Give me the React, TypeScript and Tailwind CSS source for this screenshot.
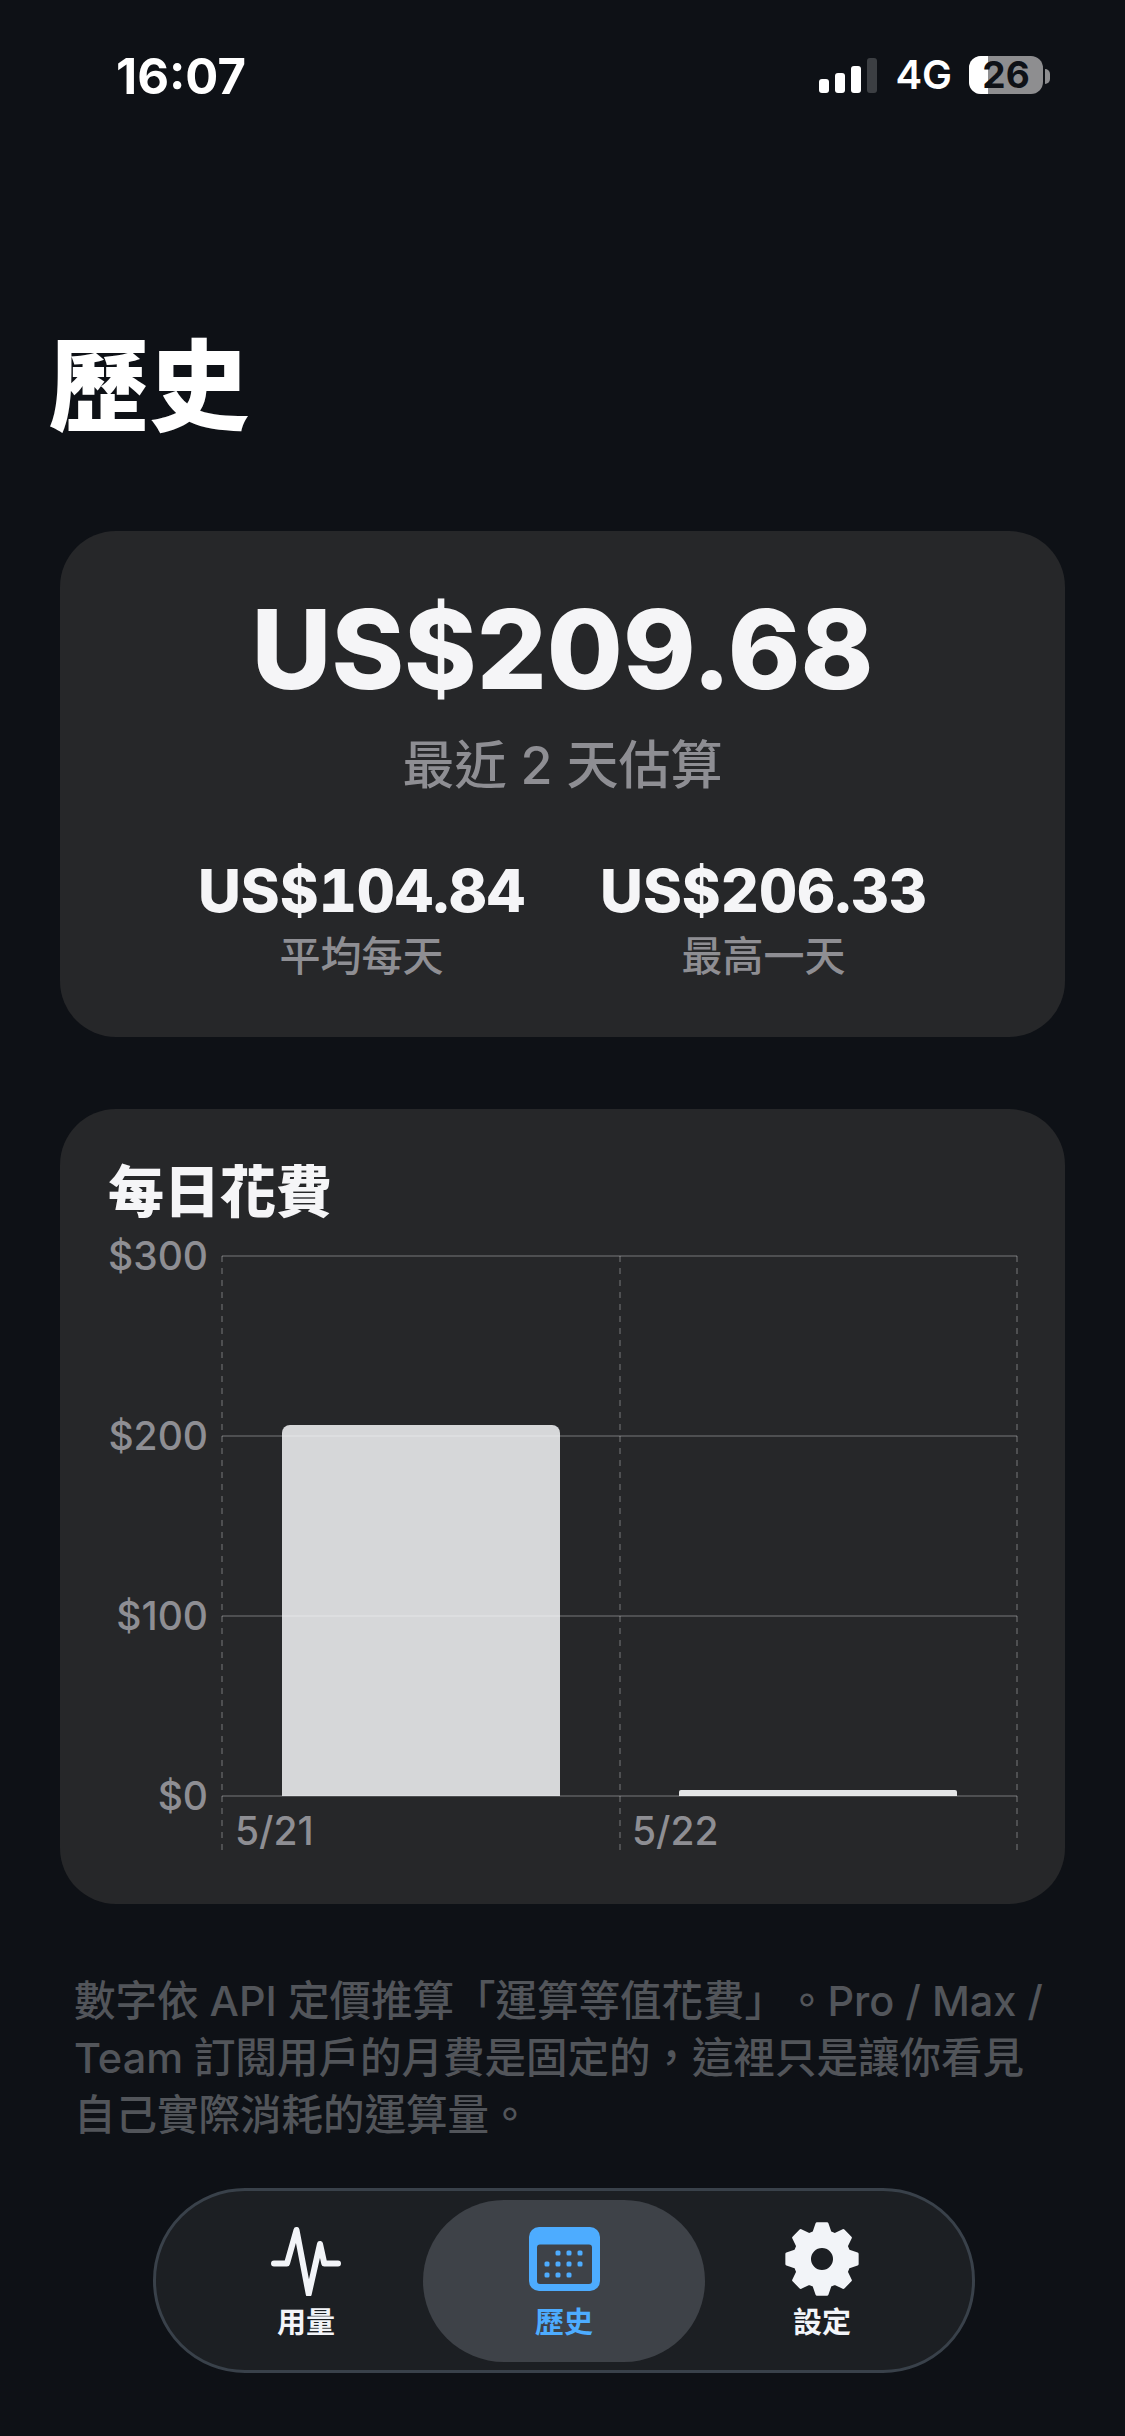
function gearPath() {
	const cx = 37;
	const cy = 37;
	const pts: string[] = [];
	for (let i = 0; i < 8; i++) {
		const a = (i * Math.PI) / 4 - Math.PI / 2;
		const step = Math.PI / 8;
		const list: [number, number][] = [
			[27.5, a - step * 0.76],
			[35.5, a - step * 0.36],
			[35.5, a + step * 0.36],
			[27.5, a + step * 0.76],
		];
		for (const [r, t] of list) {
			pts.push(`${(cx + r * Math.cos(t)).toFixed(2)} ${(cy + r * Math.sin(t)).toFixed(2)}`);
		}
	}
	return `M${pts.join("L")}Z`;
}

function StatusBar() {
	return (
		<div className="flex h-[94px] items-start justify-between pt-[56px] pl-[116px] pr-[75px]">
			<span className="text-[49px] leading-[42px] font-bold text-white">16:07</span>
			<div className="flex items-start">
				<div className="flex h-[35px] items-end gap-[6px] mt-[2px]">
					<div className="h-[14px] w-[10px] rounded-[3px] bg-white" />
					<div className="h-[20px] w-[10px] rounded-[3px] bg-white" />
					<div className="h-[27px] w-[10px] rounded-[3px] bg-white" />
					<div className="h-[35px] w-[10px] rounded-[3px] bg-[#3c3f43]" />
				</div>
				<span className="ml-[18px] text-[40px] leading-[38px] font-semibold text-white">4G</span>
				<div className="relative ml-[17px] flex h-[38px] w-[74px] items-center justify-center rounded-[12px] bg-[#8e8e90]">
					<div className="absolute inset-y-0 left-0 w-[19px] rounded-l-[12px] bg-white" />
					<span className="relative text-[37px] leading-[38px] font-bold text-[#0e1116]">26</span>
				</div>
				<div className="ml-[2px] mt-[13px] h-[15px] w-[5px] rounded-r-full bg-[#8e8e90]" />
			</div>
		</div>
	);
}

function SummaryCard() {
	return (
		<div className="mx-[60px] mt-[92px] flex h-[506px] flex-col items-center rounded-[56px] bg-[#262729] pt-[56px]">
			<div className="text-[110px] leading-[124px] font-extrabold text-[#f5f5f7]">US$209.68</div>
			<div className="mt-[23px] text-[52px] leading-[64px] font-medium text-[#8e8e93]">最近 2 天估算</div>
			<div className="mt-[58px] flex gap-[75px]">
				<Stat value="US$104.84" label="平均每天" />
				<Stat value="US$206.33" label="最高一天" />
			</div>
		</div>
	);
}

function Stat({ value, label }: { value: string; label: string }) {
	return (
		<div className="flex flex-col items-center">
			<div className="text-[59px] leading-[70px] font-extrabold tabular-nums text-[#f5f5f7]">{value}</div>
			<div className="mt-[4px] text-[41px] leading-[52px] font-medium text-[#8e8e93]">{label}</div>
		</div>
	);
}

function ChartCard() {
	const grid = "rgba(255,255,255,0.25)";
	const ys = [16, 196, 376, 556];
	const labels = ["$300", "$200", "$100", "$0"];
	return (
		<div className="mx-[60px] mt-[72px] h-[795px] rounded-[56px] bg-[#262729]">
			<div className="px-[48px] pt-[41px] pb-[5px] text-[56px] leading-[85px] font-black text-[#f5f5f7]">每日花費</div>
			<svg width="1005" height="664" className="block overflow-visible">
				<path d="M222 556V193a8 8 0 0 1 8-8H492a8 8 0 0 1 8 8V556Z" fill="#d6d7d9" />
				<path d="M619 556V552a2 2 0 0 1 2-2H895a2 2 0 0 1 2 2V556Z" fill="#e4e5e6" />
				{ys.map((y) => (
					<line key={y} x1="162" x2="957" y1={y} y2={y} stroke={grid} strokeWidth="1.5" />
				))}
				{[162, 560, 957].map((x) => (
					<line key={x} x1={x} x2={x} y1="16" y2="610" stroke={grid} strokeWidth="1.5" strokeDasharray="6 6" />
				))}
				{labels.map((t, i) => (
					<text key={t} x="148" y={ys[i] + 14} textAnchor="end" fontSize="39" fontWeight="500" fill="#8e8e93">
						{t}
					</text>
				))}
				<text x="175" y="605" fontSize="39" fontWeight="500" fill="#8e8e93">
					5/21
				</text>
				<text x="572" y="605" fontSize="39" fontWeight="500" fill="#8e8e93">
					5/22
				</text>
			</svg>
		</div>
	);
}

function Nav() {
	return (
		<div className="relative ml-[153px] mt-[44px] flex h-[185px] w-[822px] items-center justify-center rounded-[92px] border-[3px] border-[#39414a] bg-[#1c1f23]">
			<div className="absolute left-[267px] top-[9px] h-[162px] w-[282px] rounded-[81px] bg-[#3e4248]" />
			<NavItem label="用量" color="text-[#f2f4f8]">
				<svg width="70" height="74" viewBox="0 0 70 74" fill="none">
					<path
						d="M3 41.5H16L25.5 8L37.7 72L49 22L53.3 41.5H67"
						stroke="#f2f4f8"
						strokeWidth="6"
						strokeLinecap="round"
						strokeLinejoin="round"
					/>
				</svg>
			</NavItem>
			<NavItem label="歷史" color="text-[#4dacff]">
				<svg width="71" height="64" viewBox="0 0 71 64">
					<rect width="71" height="64" rx="10" fill="#4dacff" />
					<rect x="8" y="17.5" width="55" height="39.5" rx="3" fill="#3e4248" />
					{[
						[29, 26],
						[40, 26],
						[51, 26],
						[18, 37],
						[29, 37],
						[40, 37],
						[51, 37],
						[18, 48],
						[29, 48],
						[40, 48],
					].map(([x, y]) => (
						<rect key={`${x}-${y}`} x={x - 2.5} y={y - 2.5} width="5" height="5" rx="1.5" fill="#4dacff" />
					))}
				</svg>
			</NavItem>
			<NavItem label="設定" color="text-[#f2f4f8]">
				<svg width="74" height="74" viewBox="0 0 74 74">
					<path
						d={`${gearPath()}M37 24.5a12.5 12.5 0 1 0 0 25a12.5 12.5 0 1 0 0-25Z`}
						fillRule="evenodd"
						fill="#f2f4f8"
						stroke="#f2f4f8"
						strokeWidth="3"
						strokeLinejoin="round"
					/>
				</svg>
			</NavItem>
		</div>
	);
}

function NavItem({ label, color, children }: { label: string; color: string; children: React.ReactNode }) {
	return (
		<div className="relative flex w-[258px] flex-col items-center">
			<div className="flex h-[74px] items-center">{children}</div>
			<span className={`mt-[10px] text-[29px] leading-[34px] font-bold ${color}`}>{label}</span>
		</div>
	);
}

export default function App() {
	return (
		<div className="flex h-[2436px] w-[1125px] flex-col overflow-hidden bg-[#0e1116] font-[Inter,'Noto_Sans_CJK_TC',sans-serif]">
			<StatusBar />
			<h1 className="mt-[240px] pl-[49px] text-[100px] leading-[105px] font-black text-white">歷史</h1>
			<SummaryCard />
			<ChartCard />
			<p className="mt-[69px] px-[74px] text-[41.5px] leading-[57px] font-medium text-[#52555a] [text-spacing-trim:space-all]">
				數字依 API 定價推算「運算等值花費」。Pro / Max / Team 訂閱用戶的月費是固定的，這裡只是讓你看見自己實際消耗的運算量。
			</p>
			<Nav />
		</div>
	);
}
